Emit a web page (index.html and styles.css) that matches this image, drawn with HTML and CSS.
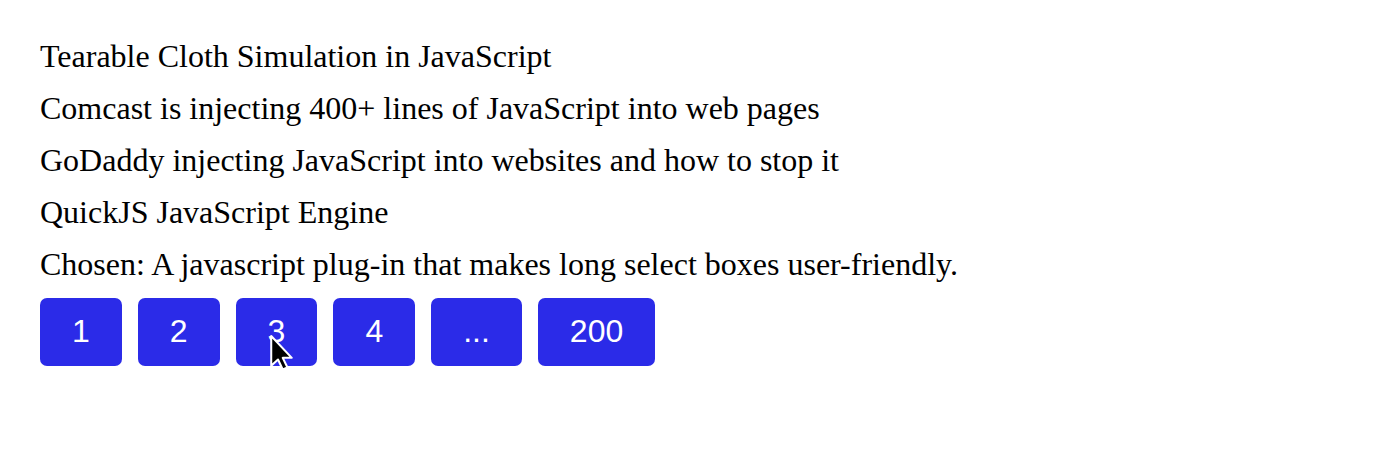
FILE: index.html
```html
<!DOCTYPE html>
<html lang="en">
<head>
<meta charset="utf-8">
<title>Posts</title>
<link rel="stylesheet" href="styles.css">
</head>
<body>
<main class="page">
  <ul class="posts">
    <li class="post">Tearable Cloth Simulation in JavaScript</li>
    <li class="post">Comcast is injecting 400+ lines of JavaScript into web pages</li>
    <li class="post">GoDaddy injecting JavaScript into websites and how to stop it</li>
    <li class="post">QuickJS JavaScript Engine</li>
    <li class="post">Chosen: A javascript plug-in that makes long select boxes user-friendly.</li>
  </ul>
  <nav class="pager">
    <button class="page-btn">1</button>
    <button class="page-btn">2</button>
    <button class="page-btn page-btn--hover">3
      <svg class="cursor" width="25" height="37" viewBox="0 0 12 18" aria-hidden="true">
        <path d="M1 1 L1 15.5 L4.3 12.4 L6.6 17.3 L8.9 16.3 L6.6 11.6 L11 11.6 Z" fill="#000" stroke="#fff" stroke-width="1" stroke-linejoin="round"/>
      </svg>
    </button>
    <button class="page-btn">4</button>
    <button class="page-btn">...</button>
    <button class="page-btn">200</button>
  </nav>
</main>
</body>
</html>
```

FILE: styles.css
```css
html, body {
  margin: 0;
  padding: 0;
  background: #ffffff;
}

.page {
  padding: 30px 40px;
  font-family: "Liberation Serif", "Times New Roman", serif;
  color: #000;
}

.posts {
  list-style: none;
  margin: 0;
  padding: 0;
}

.post {
  font-size: 32px;
  line-height: 52px;
}

.pager {
  display: flex;
  gap: 16px;
  margin-top: 8px;
}

.page-btn {
  position: relative;
  border: 0;
  margin: 0;
  padding: 15px 32px 17px;
  background: #2b2be8;
  color: #fff;
  font-family: "Liberation Sans", Arial, sans-serif;
  font-size: 32px;
  line-height: 36px;
  border-radius: 7px;
  cursor: pointer;
}

.cursor {
  position: absolute;
  left: 33px;
  top: 36px;
  overflow: visible;
}
```
